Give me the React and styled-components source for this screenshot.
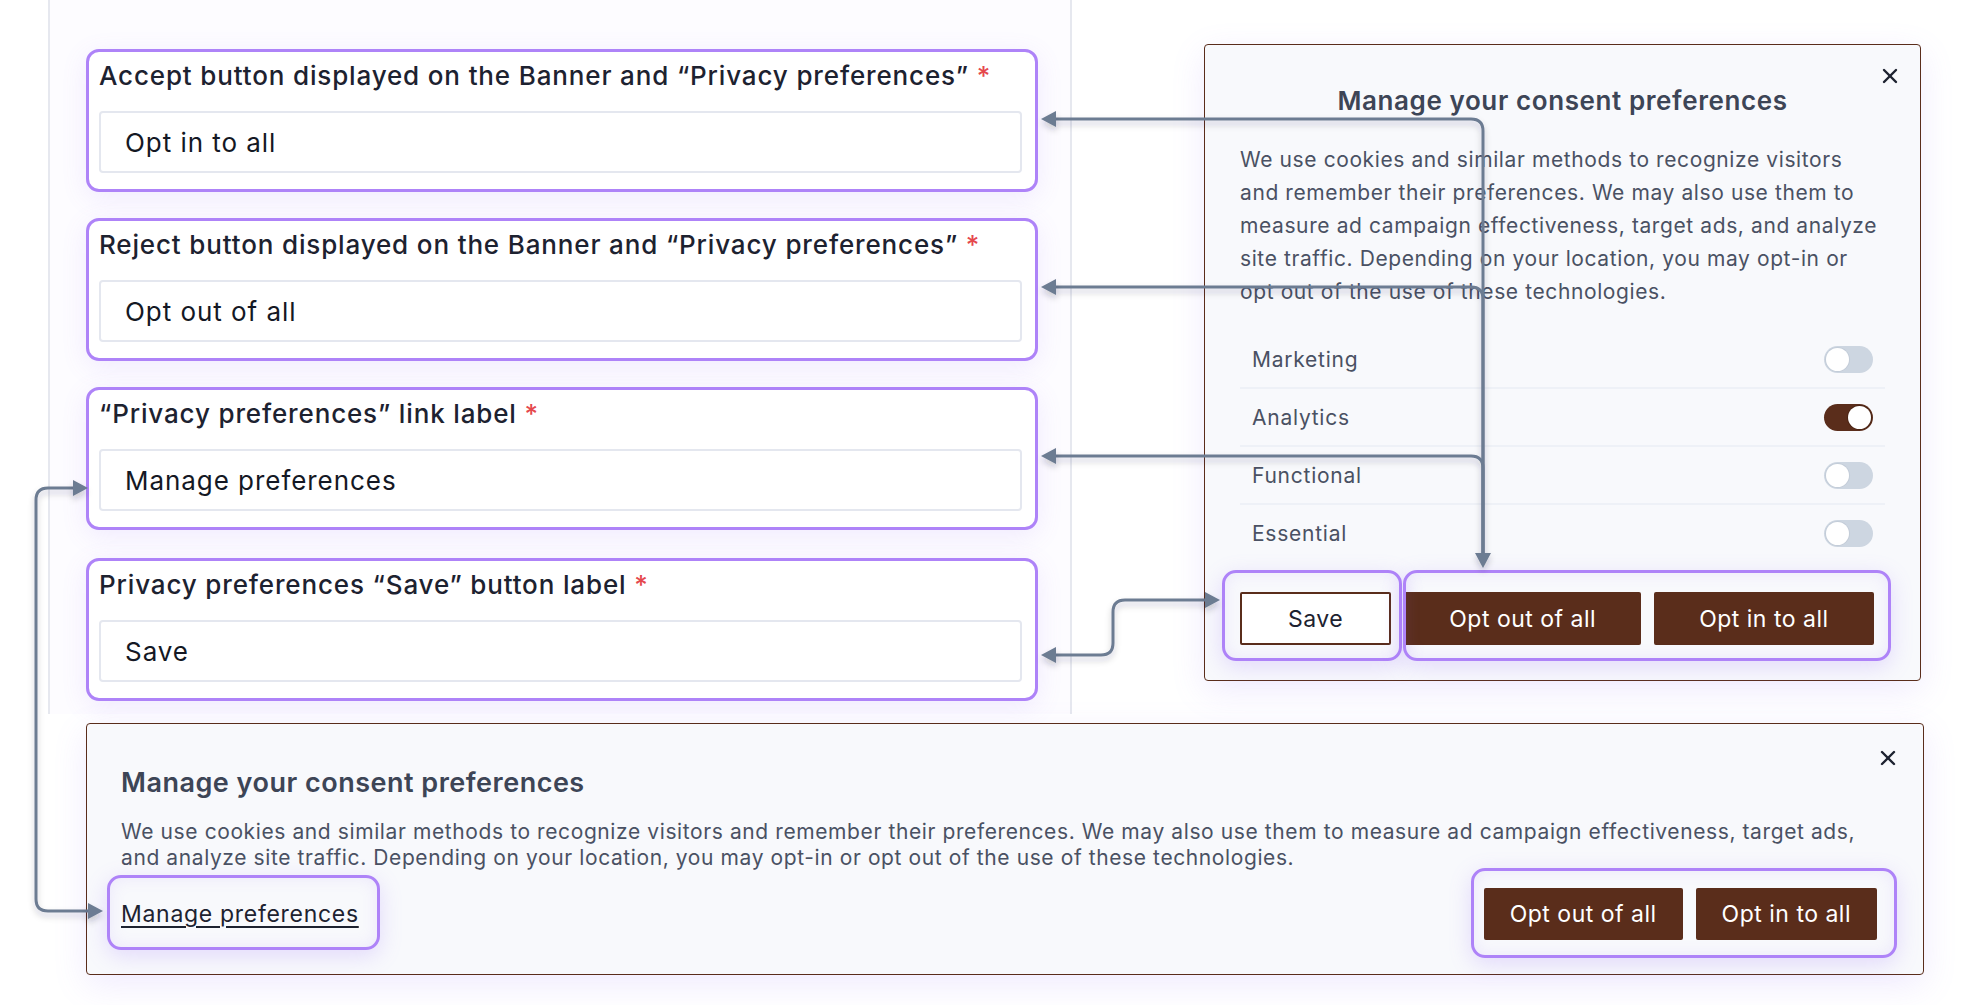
import React from "react";
import styled, { createGlobalStyle } from "styled-components";
import { X } from "lucide-react";

const BROWN = "#5a2d1b";
const PURPLE = "#ae83f8";
const SLATE = "#6c7b92";

const GlobalStyle = createGlobalStyle`
  html, body { margin: 0; padding: 0; background: #fff; }
  body { font-family: Inter, "Noto Sans", sans-serif; }
  * { box-sizing: border-box; }
`;

const Page = styled.div`
  position: relative;
  width: 1982px;
  height: 1005px;
  overflow: hidden;
  background: #fff;
`;

const TopRow = styled.div`
  display: flex;
  align-items: flex-start;
`;

// Settings form on the left
const FormColumn = styled.div`
  margin-left: 48px;
  width: 1024px;
  height: 714px;
  border-left: 2px solid #e6e8ef;
  border-right: 2px solid #e6e8ef;
  padding: 49px 0 0 36px;
  display: flex;
  flex-direction: column;
  gap: 26px;
  background: #fdfcff;
`;

const FieldGroup = styled.div`
  width: 952px;
  border: 3px solid ${PURPLE};
  border-radius: 13px;
  padding: 8px 13px 16px 10px;
  background: #fff;
  box-shadow: 0 6px 26px rgba(150, 110, 250, 0.12);
  margin-top: ${(p) => p.$extra || 0}px;
`;

const FieldLabel = styled.div`
  font-size: 26px;
  font-weight: 500;
  line-height: 32px;
  letter-spacing: 0.85px;
  color: #1d2230;
  margin-bottom: 19px;
  white-space: nowrap;

  span {
    color: #e5484d;
  }
`;

const FieldInput = styled.div`
  height: 62px;
  border: 2px solid #e4e7ef;
  border-radius: 4px;
  background: #fff;
  padding: 0 24px;
  display: flex;
  align-items: center;
  font-size: 26px;
  letter-spacing: 0.95px;
  color: #141824;
`;

// Preferences modal preview
const Modal = styled.div`
  position: relative;
  margin: 44px 0 0 132px;
  width: 717px;
  border: 1px solid ${BROWN};
  border-radius: 4px;
  background: #f8f9fc;
  padding: 39px 35px 35px 35px;
  box-shadow: 0 10px 34px rgba(150, 110, 250, 0.14);
`;

const CloseButton = styled.div`
  position: absolute;
  top: ${(p) => p.$top}px;
  right: ${(p) => p.$right}px;
  width: 24px;
  height: 24px;
  color: #1d2230;
  display: flex;
`;

const Title = styled.h2`
  margin: 0;
  font-size: ${(p) => p.$size || 26}px;
  font-weight: 600;
  line-height: 34px;
  letter-spacing: ${(p) => p.$ls || 0.6}px;
  color: #3d4556;
  text-align: ${(p) => (p.$center ? "center" : "left")};
`;

const Paragraph = styled.p`
  margin: ${(p) => p.$mt}px 0 0;
  font-size: 21px;
  line-height: ${(p) => p.$lh}px;
  letter-spacing: 0.6px;
  color: #4a5163;
`;

const ToggleList = styled.div`
  margin-top: 23px;
  display: flex;
  flex-direction: column;
`;

const ToggleRow = styled.div`
  height: 58px;
  padding: 0 12px;
  display: flex;
  align-items: center;
  justify-content: space-between;
  border-bottom: 2px solid ${(p) => (p.$last ? "transparent" : "#eef1f7")};
  font-size: 21px;
  letter-spacing: 0.75px;
  color: #4a5163;
`;

const Switch = styled.div`
  width: 49px;
  height: 27px;
  border-radius: 14px;
  background: ${(p) => (p.$on ? BROWN : "#cdd6e1")};
  padding: 2px;
  display: flex;
  justify-content: ${(p) => (p.$on ? "flex-end" : "flex-start")};

  &::after {
    content: "";
    width: 23px;
    height: 23px;
    border-radius: 50%;
    background: #fff;
    box-shadow: 0 0 0 1px ${(p) => (p.$on ? "#4a2414" : "#c3ccd8")};
  }
`;

const ButtonRow = styled.div`
  position: relative;
  display: flex;
  gap: ${(p) => p.$gap}px;
  margin-top: ${(p) => p.$mt || 0}px;
`;

const Button = styled.div`
  height: ${(p) => p.$h}px;
  padding: 0 ${(p) => p.$px}px;
  display: flex;
  align-items: center;
  justify-content: center;
  font-size: 23px;
  letter-spacing: 0.5px;
  white-space: nowrap;
  background: ${(p) => (p.$outline ? "#fff" : BROWN)};
  color: ${(p) => (p.$outline ? "#1d2230" : "#fff")};
  border: 2px solid ${BROWN};
  border-radius: 2px;
`;

// Purple annotation frame drawn over a part of the preview
const Highlight = styled.div`
  position: absolute;
  top: ${(p) => p.$t}px;
  bottom: ${(p) => p.$b}px;
  left: ${(p) => p.$l}px;
  right: ${(p) => p.$r}px;
  border: 3px solid ${PURPLE};
  border-radius: 14px;
  pointer-events: none;
  box-shadow: 0 6px 22px rgba(150, 110, 250, 0.22),
    inset 0 0 16px rgba(150, 110, 250, 0.12);
`;

const Anchor = styled.div`
  position: relative;
  display: flex;
`;

// Banner preview at the bottom
const Banner = styled.div`
  position: relative;
  margin: 9px 0 0 86px;
  width: 1838px;
  height: 252px;
  border: 1px solid ${BROWN};
  border-radius: 4px;
  background: #f8f9fc;
  padding: 42px 34px 0 34px;
  box-shadow: 0 10px 34px rgba(150, 110, 250, 0.14);
`;

const BannerFooter = styled.div`
  margin-top: 17px;
  padding-right: 12px;
  display: flex;
  align-items: center;
  justify-content: space-between;
`;

const BannerLink = styled.span`
  font-size: 23px;
  line-height: 26px;
  letter-spacing: 0.7px;
  color: #1d2230;
  text-decoration: underline;
  text-underline-offset: 4px;
`;

const Connectors = styled.svg`
  position: absolute;
  left: 0;
  top: 0;
  pointer-events: none;
  overflow: visible;
`;

const fields = [
  { label: "Accept button displayed on the Banner and “Privacy preferences”", value: "Opt in to all" },
  { label: "Reject button displayed on the Banner and “Privacy preferences”", value: "Opt out of all" },
  { label: "“Privacy preferences” link label", value: "Manage preferences" },
  { label: "Privacy preferences “Save” button label", value: "Save", extra: 2 },
];

const categories = [
  { name: "Marketing", on: false },
  { name: "Analytics", on: true },
  { name: "Functional", on: false },
  { name: "Essential", on: false },
];

const modalText =
  "We use cookies and similar methods to recognize visitors and remember their preferences. We may also use them to measure ad campaign effectiveness, target ads, and analyze site traffic. Depending on your location, you may opt-in or opt out of the use of these technologies.";

const r = 12;
const arrowLeft = (x, y) => `M${x} ${y} L${x + 15} ${y - 8} L${x + 15} ${y + 8} Z`;
const arrowRight = (x, y) => `M${x} ${y} L${x - 15} ${y - 8} L${x - 15} ${y + 8} Z`;
const arrowDown = (x, y) => `M${x} ${y} L${x - 8} ${y - 15} L${x + 8} ${y - 15} Z`;

function ConnectorLayer() {
  const trunkX = 1483;
  const branches = [119, 287, 456];
  return (
    <Connectors width="1982" height="1005">
      <defs>
        <filter id="lineShadow" x="-10%" y="-10%" width="120%" height="120%">
          <feDropShadow dx="0" dy="4" stdDeviation="3" floodColor="#1f2937" floodOpacity="0.22" />
        </filter>
      </defs>
      <g filter="url(#lineShadow)" stroke={SLATE} strokeWidth="3" fill="none">
        {branches.map((y) => (
          <path key={y} d={`M1055 ${y} H${trunkX - r} Q${trunkX} ${y} ${trunkX} ${y + r} V555`} />
        ))}
        <path d={`M1055 655 H${1113 - r} Q1113 655 1113 ${655 - r} V${600 + r} Q1113 600 ${1113 + r} 600 H1207`} />
        <path d={`M90 911 H${36 + r} Q36 911 36 ${911 - r} V${488 + r} Q36 488 ${36 + r} 488 H75`} />
      </g>
      <g fill={SLATE} filter="url(#lineShadow)">
        {branches.map((y) => (
          <path key={y} d={arrowLeft(1041, y)} />
        ))}
        <path d={arrowDown(trunkX, 568)} />
        <path d={arrowLeft(1041, 655)} />
        <path d={arrowRight(1220, 600)} />
        <path d={arrowRight(88, 488)} />
        <path d={arrowRight(103, 911)} />
      </g>
    </Connectors>
  );
}

export default function App() {
  return (
    <Page>
      <GlobalStyle />
      <TopRow>
        <FormColumn>
          {fields.map((f) => (
            <FieldGroup key={f.value} $extra={f.extra}>
              <FieldLabel>
                {f.label} <span>*</span>
              </FieldLabel>
              <FieldInput>{f.value}</FieldInput>
            </FieldGroup>
          ))}
        </FormColumn>

        <Modal>
          <CloseButton $top={19} $right={18}>
            <X size={24} strokeWidth={2.4} />
          </CloseButton>
          <Title $center>Manage your consent preferences</Title>
          <Paragraph $mt={25} $lh={33}>
            {modalText}
          </Paragraph>
          <ToggleList>
            {categories.map((c, i) => (
              <ToggleRow key={c.name} $last={i === categories.length - 1}>
                {c.name}
                <Switch $on={c.on} />
              </ToggleRow>
            ))}
          </ToggleList>
          <ButtonRow $gap={13} $mt={29}>
            <Anchor>
              <Button $outline $h={53} $px={46}>
                Save
              </Button>
              <Highlight $t={-22} $b={-16} $l={-18} $r={-11} />
            </Anchor>
            <Anchor>
              <ButtonRow $gap={13}>
                <Button $h={53} $px={43}>Opt out of all</Button>
                <Button $h={53} $px={43}>Opt in to all</Button>
              </ButtonRow>
              <Highlight $t={-22} $b={-16} $l={-1} $r={-17} />
            </Anchor>
          </ButtonRow>
        </Modal>
      </TopRow>

      <Banner>
        <CloseButton $top={22} $right={23}>
          <X size={24} strokeWidth={2.4} />
        </CloseButton>
        <Title $size={27} $ls={0.5}>Manage your consent preferences</Title>
        <Paragraph $mt={19} $lh={26}>
          {modalText}
        </Paragraph>
        <BannerFooter>
          <Anchor>
            <BannerLink>Manage preferences</BannerLink>
            <Highlight $t={-26} $b={-23} $l={-14} $r={-21} />
          </Anchor>
          <Anchor>
            <ButtonRow $gap={13}>
              <Button $h={52} $px={24}>Opt out of all</Button>
              <Button $h={52} $px={24}>Opt in to all</Button>
            </ButtonRow>
            <Highlight $t={-20} $b={-18} $l={-13} $r={-20} />
          </Anchor>
        </BannerFooter>
      </Banner>

      <ConnectorLayer />
    </Page>
  );
}
